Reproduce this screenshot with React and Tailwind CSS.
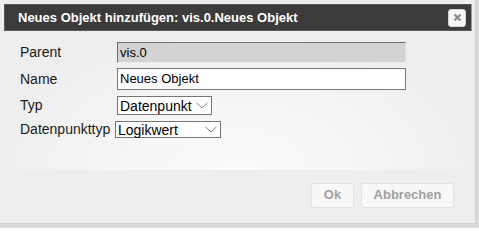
import React from 'react';

const font = { fontFamily: '"Liberation Sans", Arial, sans-serif' };

const Chevron = () => (
  <svg width="12" height="7" viewBox="0 0 12 7" fill="none">
    <path d="M0.5 0.8 L6 6 L11.5 0.8" stroke="#858585" strokeWidth="1" />
  </svg>
);

const FakeSelect = ({ value, className }) => (
  <div className={`flex items-center justify-between bg-white border border-[#767676] pl-[2px] pr-[3px] text-[14px] leading-none text-black ${className}`}>
    <span>{value}</span>
    <Chevron />
  </div>
);

export default function App() {
  return (
    <div className="w-[479px] h-[228px] bg-[#dadada]" style={font}>
      <div className="w-[476px] h-[224px] bg-[#eeeeee] border-r border-b border-[#d0d0d0] p-[4px] pr-[3px] flex flex-col">
        {/* title bar */}
        <div className="h-[27px] bg-[#3b3b3b] border border-[#5a5a5a] border-r-[#9a9a9a] flex items-center justify-between pl-[13px] pr-[5px]">
          <span className="text-white text-[13px] font-bold">Neues Objekt hinzufügen: vis.0.Neues Objekt</span>
          <button className="w-[18px] h-[18px] bg-[#f6f6f6] border border-[#d3d3d3] rounded-[3px] flex items-center justify-center">
            <svg width="9" height="9" viewBox="0 0 9 9">
              <path d="M1.5 1.5 L7.5 7.5 M7.5 1.5 L1.5 7.5" stroke="#8a8a8a" strokeWidth="2.2" />
            </svg>
          </button>
        </div>

        {/* content */}
        <div className="h-[139px] bg-[radial-gradient(ellipse_at_50%_100%,#fbfbfb_0%,#f6f6f6_35%,#eeeeee_75%)] pl-[16px] pt-[11px] text-[14px] text-[#1a1a1a]">
          <div className="grid grid-cols-[97px_auto] items-center">
            <span>Parent</span>
            <div className="w-[289px] h-[21px] bg-[#d3d3d3] border border-[#6f6f6f] border-b-[#ececec] border-r-[#e0e0e0] px-[2px] flex items-center text-[13px] text-black">vis.0</div>

            <span className="mt-[5px]">Name</span>
            <div className="mt-[5px] w-[289px] h-[22px] bg-white border border-[#767676] px-[2px] flex items-center text-[13px] text-black">Neues Objekt</div>

            <span className="mt-[5px]">Typ</span>
            <FakeSelect value="Datenpunkt" className="mt-[5px] w-[95px] h-[19px]" />

            <span className="mt-[3px] whitespace-nowrap">Datenpunkttyp</span>
            <FakeSelect value="Logikwert" className="mt-[3px] -ml-[2px] w-[106px] h-[17px]" />
          </div>
        </div>

        {/* button pane */}
        <div className="flex-1 flex items-center justify-end gap-[7px] pr-[18px] pt-[1px]">
          <button className="w-[43px] h-[25px] bg-[#f8f8f8] border border-[#e3e3e3] rounded-[3px] text-[13px] font-bold text-[#a0a0a0]">Ok</button>
          <button className="w-[93px] h-[25px] bg-[#f8f8f8] border border-[#e3e3e3] rounded-[3px] text-[13px] font-bold text-[#a0a0a0]">Abbrechen</button>
        </div>
      </div>
    </div>
  );
}
